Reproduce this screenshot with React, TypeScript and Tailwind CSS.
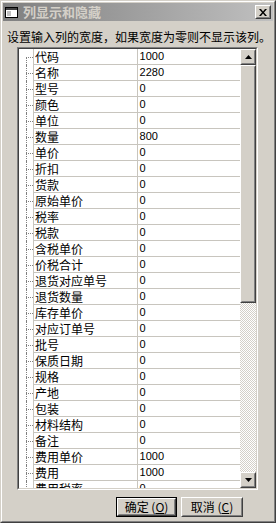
const rows: [string, string][] = [
	["代码", "1000"],
	["名称", "2280"],
	["型号", "0"],
	["颜色", "0"],
	["单位", "0"],
	["数量", "800"],
	["单价", "0"],
	["折扣", "0"],
	["货款", "0"],
	["原始单价", "0"],
	["税率", "0"],
	["税款", "0"],
	["含税单价", "0"],
	["价税合计", "0"],
	["退货对应单号", "0"],
	["退货数量", "0"],
	["库存单价", "0"],
	["对应订单号", "0"],
	["批号", "0"],
	["保质日期", "0"],
	["规格", "0"],
	["产地", "0"],
	["包装", "0"],
	["材料结构", "0"],
	["备注", "0"],
	["费用单价", "1000"],
	["费用", "1000"],
	["费用税率", "0"],
];

// classic raised bevel: outer white/dark, inner face/gray
function Raised({ className, children }: { className?: string; children?: React.ReactNode }) {
	return (
		<div className={`border border-t-[#ffffff] border-l-[#ffffff] border-r-[#404040] border-b-[#404040] ${className ?? ""}`}>
			<div className="w-full h-full border border-t-[#d4d0c8] border-l-[#d4d0c8] border-r-[#808080] border-b-[#808080] bg-[#d4d0c8] flex items-center justify-center">
				{children}
			</div>
		</div>
	);
}

function Arrow({ up }: { up?: boolean }) {
	return (
		<svg width="7" height="4" viewBox="0 0 7 4">
			{up ? <path d="M3.5 0 L7 4 L0 4 Z" fill="#000" /> : <path d="M0 0 L7 0 L3.5 4 Z" fill="#000" />}
		</svg>
	);
}

// dotted connector of the tree on the left of each row
function TreeCell({ first }: { first: boolean }) {
	return (
		<div className="w-[14px] h-full pl-[7px] flex flex-col shrink-0">
			<div className={`h-[8px] ${first ? "" : "border-l border-dotted border-[#808080]"}`} />
			<div className="flex-1 border-l border-t border-dotted border-[#808080]" />
		</div>
	);
}

export default function App() {
	const cjk = "font-['Noto_Sans_CJK_SC',sans-serif]";
	return (
		<div className={`w-[276px] h-[523px] bg-[#d4d0c8] border border-t-[#d4d0c8] border-l-[#d4d0c8] border-r-[#404040] border-b-[#404040] ${cjk}`}>
			<div className="w-full h-full border border-t-white border-l-white border-r-[#808080] border-b-[#808080] p-px flex flex-col">
				{/* title bar */}
				<div className="h-[18px] flex items-center bg-linear-to-r from-[#808080] to-[#c0c0c0] pl-[2px] pr-[2px]">
					<svg width="14" height="12" viewBox="0 0 14 12" className="shrink-0">
						<rect x="0.5" y="1.5" width="12" height="10" fill="#fff" stroke="#000" />
						<rect x="1" y="2" width="11" height="2" fill="#404040" />
						<rect x="2" y="5" width="4" height="5" fill="#c0c0c0" />
					</svg>
					<span className="ml-[4px] text-[13px] leading-[16px] font-bold text-[#d4d0c8]">列显示和隐藏</span>
					<div className="flex-1" />
					<Raised className="w-[16px] h-[14px]">
						<svg width="8" height="7" viewBox="0 0 8 7">
							<path d="M0 0 L2 0 L4 2.5 L6 0 L8 0 L5 3.5 L8 7 L6 7 L4 4.5 L2 7 L0 7 L3 3.5 Z" fill="#000" />
						</svg>
					</Raised>
				</div>

				<p className="mt-[8px] pl-[4px] text-[12px] leading-[16px] text-black whitespace-nowrap">
					设置输入列的宽度，如果宽度为零则不显示该列。
				</p>

				{/* list */}
				<div className="mt-[2px] ml-[14px] w-[241px] h-[443px] border border-t-[#808080] border-l-[#808080] border-r-white border-b-white">
					<div className="w-full h-full border border-t-[#404040] border-l-[#404040] border-r-[#d4d0c8] border-b-[#d4d0c8] flex bg-white">
						<div className="w-[222px] h-full overflow-hidden">
							{rows.map(([name, val], i) => (
								<div key={name} className="h-[16px] flex">
									<TreeCell first={i === 0} />
									<div className="w-[104px] border-l border-b border-[#c8c5be] pl-[1px] text-[12px] leading-[15px] text-black whitespace-nowrap overflow-hidden">
										{name}
									</div>
									<div className="w-[104px] border-l border-b border-[#c8c5be] pl-[2px] text-[11px] leading-[15px] text-black font-['Liberation_Sans',sans-serif]">
										{val}
									</div>
								</div>
							))}
						</div>
						{/* scrollbar */}
						<div className="w-[16px] h-full flex flex-col bg-[image:repeating-conic-gradient(#d4d0c8_0%_25%,#ffffff_0%_50%)] bg-[length:2px_2px]">
							<Raised className="h-[16px] shrink-0">
								<Arrow up />
							</Raised>
							<Raised className="h-[238px] shrink-0" />
							<div className="flex-1" />
							<Raised className="h-[16px] shrink-0">
								<Arrow />
							</Raised>
						</div>
					</div>
				</div>

				{/* buttons */}
				<div className="mt-[7px] flex justify-end gap-[4px] pr-[30px]">
					<div className="border border-black">
						<Raised className="w-[59px] h-[18px]">
							<span className="text-[12px] leading-[14px] text-black">
								确定 (<span className="underline">O</span>)
							</span>
						</Raised>
					</div>
					<Raised className="w-[62px] h-[20px]">
						<span className="text-[12px] leading-[14px] text-black">
							取消 (<span className="underline">C</span>)
						</span>
					</Raised>
				</div>
			</div>
		</div>
	);
}
